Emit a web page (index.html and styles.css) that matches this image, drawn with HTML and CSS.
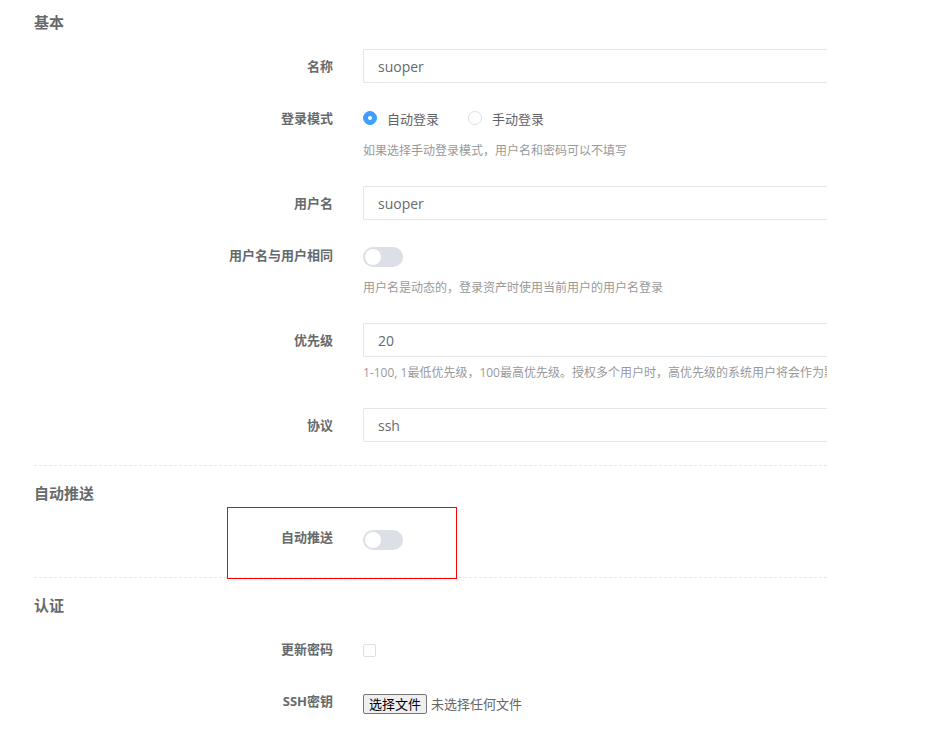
FILE: index.html
```html
<!DOCTYPE html>
<html lang="zh-CN">
<head>
    <meta charset="UTF-8">
    <title>系统用户</title>
    <link rel="stylesheet" href="styles.css">
</head>
<body>
    <div class="form-wrap">
        <!-- 基本 -->
        <section class="form-section first">
            <h3 class="section-title">基本</h3>

            <div class="form-group">
                <label class="control-label">名称</label>
                <div class="control">
                    <input class="form-control" type="text" value="suoper">
                </div>
            </div>

            <div class="form-group">
                <label class="control-label">登录模式</label>
                <div class="control">
                    <div class="radio-line">
                        <span class="radio"><span class="radio-dot checked"></span>自动登录</span>
                        <span class="radio"><span class="radio-dot"></span>手动登录</span>
                    </div>
                    <div class="help-block">如果选择手动登录模式，用户名和密码可以不填写</div>
                </div>
            </div>

            <div class="form-group">
                <label class="control-label">用户名</label>
                <div class="control">
                    <input class="form-control" type="text" value="suoper">
                </div>
            </div>

            <div class="form-group">
                <label class="control-label">用户名与用户相同</label>
                <div class="control">
                    <span class="switch"></span>
                    <div class="help-block">用户名是动态的，登录资产时使用当前用户的用户名登录</div>
                </div>
            </div>

            <div class="form-group">
                <label class="control-label">优先级</label>
                <div class="control">
                    <input class="form-control" type="text" value="20">
                    <div class="help-block">1-100, 1最低优先级，100最高优先级。授权多个用户时，高优先级的系统用户将会作为默认登录用户</div>
                </div>
            </div>

            <div class="form-group">
                <label class="control-label">协议</label>
                <div class="control">
                    <input class="form-control" type="text" value="ssh">
                </div>
            </div>
        </section>

        <!-- 自动推送 -->
        <section class="form-section">
            <h3 class="section-title">自动推送</h3>

            <div class="form-group">
                <label class="control-label">自动推送</label>
                <div class="control">
                    <span class="switch switch-push"></span>
                </div>
            </div>

            <div class="highlight"></div>
        </section>

        <!-- 认证 -->
        <section class="form-section">
            <h3 class="section-title">认证</h3>

            <div class="form-group">
                <label class="control-label">更新密码</label>
                <div class="control">
                    <span class="checkbox"></span>
                </div>
            </div>

            <div class="form-group">
                <label class="control-label">SSH密钥</label>
                <div class="control file-line">
                    <button class="file-btn" type="button">选择文件</button>
                    <span class="file-name">未选择任何文件</span>
                </div>
            </div>
        </section>
    </div>
</body>
</html>
```

FILE: styles.css
```css
body {
    margin: 0;
    background: #fff;
    color: #676a6c;
    font-family: "Open Sans", "Noto Sans CJK SC", sans-serif;
}

.form-wrap {
    width: 793px;
    margin-left: 34px;
    overflow: hidden;
}

.form-section {
    position: relative;
    padding: 17px 0 5px;
    border-bottom: 1px dashed #e7eaec;
}

.form-section.first {
    padding-top: 12px;
}

.form-section:last-child {
    border-bottom: none;
}

.section-title {
    margin: 0 0 17px;
    font-size: 15px;
    font-weight: 700;
    line-height: 20px;
}

.form-group {
    display: flex;
    margin-bottom: 18px;
}

.control-label {
    flex: none;
    box-sizing: border-box;
    width: 329px;
    padding-right: 30px;
    text-align: right;
    font-size: 13px;
    font-weight: 700;
    line-height: 34px;
}

.control {
    flex: 1;
    min-width: 0;
}

.form-control {
    display: block;
    box-sizing: border-box;
    width: 520px;
    height: 34px;
    padding: 0 14px;
    border: 1px solid #e5e6e7;
    border-radius: 1px;
    font-family: "Open Sans", "Noto Sans CJK SC", sans-serif;
    font-size: 14px;
    color: #676a6c;
    outline: none;
}

.help-block {
    margin: 7px 0 8px;
    font-size: 12px;
    line-height: 18px;
    color: #999;
    white-space: nowrap;
}

.radio-line {
    display: flex;
    align-items: center;
    height: 34px;
    font-size: 13px;
    color: #606266;
}

.radio {
    display: inline-flex;
    align-items: center;
    margin-right: 29px;
}

.radio-dot {
    position: relative;
    box-sizing: border-box;
    width: 14px;
    height: 14px;
    margin-right: 10px;
    border: 1px solid #dcdfe6;
    border-radius: 50%;
    background: #fff;
}

.radio-dot.checked {
    border-color: #409eff;
    background: #409eff;
}

.radio-dot.checked::after {
    content: "";
    position: absolute;
    left: 4px;
    top: 4px;
    width: 4px;
    height: 4px;
    border-radius: 50%;
    background: #fff;
}

.switch {
    position: relative;
    display: block;
    width: 40px;
    height: 20px;
    margin: 9px 0 12px;
    border-radius: 10px;
    background: #dcdfe6;
}

.switch::after {
    content: "";
    position: absolute;
    left: 2px;
    top: 2px;
    width: 16px;
    height: 16px;
    border-radius: 50%;
    background: #fff;
}

.switch-push {
    margin: 10px 0 4px;
}

.checkbox {
    display: block;
    box-sizing: border-box;
    width: 13px;
    height: 13px;
    margin-top: 12px;
    border: 1px solid #dcdfe6;
    border-radius: 2px;
}

.file-line {
    display: flex;
    align-items: flex-start;
    padding-top: 10px;
}

.file-btn {
    box-sizing: border-box;
    height: 20px;
    padding: 0 5px;
    border: 1px solid #767676;
    border-radius: 2px;
    background: #efefef;
    color: #000;
    font-family: "Noto Sans CJK SC", sans-serif;
    font-size: 13px;
    line-height: 18px;
}

.file-name {
    margin-left: 4px;
    font-family: "Noto Sans CJK SC", sans-serif;
    font-size: 13px;
    line-height: 20px;
    color: #666;
}

.highlight {
    position: absolute;
    left: 193px;
    top: 41px;
    box-sizing: border-box;
    width: 230px;
    height: 72px;
    border: 1px solid #f00;
}
```
